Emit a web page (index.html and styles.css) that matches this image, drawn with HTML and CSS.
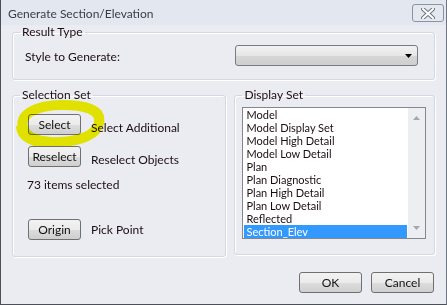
FILE: index.html
```html
<!DOCTYPE html>
<html lang="en">
<head>
  <meta charset="UTF-8">
  <title>Generate Section/Elevation</title>
  <link rel="stylesheet" href="styles.css">
</head>
<body>
  <div class="window">
    <div class="titlebar">
      <span class="title">Generate Section/Elevation</span>
      <button class="close-button">
        <svg width="14" height="11" viewBox="0 0 14 11">
          <path d="M2 1 L12 10 M12 1 L2 10" stroke="#6d7480" stroke-width="4" stroke-linecap="round"/>
          <path d="M2 1 L12 10 M12 1 L2 10" stroke="#fff" stroke-width="2" stroke-linecap="round"/>
        </svg>
      </button>
    </div>

    <div class="client">
      <fieldset class="group result-group">
        <legend>Result Type</legend>
        <div class="style-row">
          <span>Style to Generate:</span>
          <div class="combo">
            <svg width="7" height="4" viewBox="0 0 7 4"><path d="M0 0 H7 L3.5 4 Z" fill="#000"/></svg>
          </div>
        </div>
      </fieldset>

      <div class="sets">
        <fieldset class="group selection-group">
          <legend>Selection Set</legend>
          <div class="cmd-row">
            <button class="btn small-btn">Select</button>
            <span class="low">Select Additional</span>
            <!-- marker circle drawn over the dialog -->
            <svg class="marker" width="98" height="56" viewBox="0 0 98 56">
              <path d="M14 34 C6 18 28 9 52 9 C74 9 92 13 89 27 C87 38 72 45 50 46 C30 47 17 42 14 34 Z" fill="none" stroke="#f4f400" stroke-width="10"/>
              <path d="M12 30 C12 40 24 46 40 47" fill="none" stroke="#f4f400" stroke-width="12"/>
            </svg>
          </div>
          <div class="cmd-row">
            <button class="btn small-btn">Reselect</button>
            <span class="low">Reselect Objects</span>
          </div>
          <div class="count">73 items selected</div>
          <div class="cmd-row origin-row">
            <button class="btn small-btn">Origin</button>
            <span>Pick Point</span>
          </div>
        </fieldset>

        <fieldset class="group display-group">
          <legend>Display Set</legend>
          <div class="listbox">
            <ul class="items">
              <li>Model</li>
              <li>Model Display Set</li>
              <li>Model High Detail</li>
              <li>Model Low Detail</li>
              <li>Plan</li>
              <li>Plan Diagnostic</li>
              <li>Plan High Detail</li>
              <li>Plan Low Detail</li>
              <li>Reflected</li>
              <li class="selected">Section_Elev</li>
            </ul>
            <div class="scrollbar">
              <svg width="7" height="4" viewBox="0 0 7 4"><path d="M0 4 H7 L3.5 0 Z" fill="#a4a7ad"/></svg>
              <svg width="7" height="4" viewBox="0 0 7 4"><path d="M0 0 H7 L3.5 4 Z" fill="#a4a7ad"/></svg>
            </div>
          </div>
        </fieldset>
      </div>

      <div class="actions">
        <button class="btn wide-btn">OK</button>
        <button class="btn wide-btn">Cancel</button>
      </div>
    </div>
  </div>
</body>
</html>
```

FILE: styles.css
```css
body {
  margin: 0;
  background: #eaecf2;
  font-family: Lato, "Open Sans", sans-serif;
  font-size: 12px;
  color: #1c0d12;
}
.window {
  width: 447px;
  height: 305px;
  box-sizing: border-box;
  border-left: 1px solid #4b4f57;
  border-right: 1px solid #6f7682;
  border-bottom: 1px solid #4b4f57;
  background: #eaecf2;
}
.titlebar {
  height: 25px;
  display: flex;
  justify-content: space-between;
  align-items: flex-start;
  background: #e2e7f0;
}
.title {
  padding: 6px 0 0 7px;
  line-height: 16px;
  color: #3a3d44;
}
.close-button {
  margin: 4px 2px 0 0;
  width: 32px;
  height: 18px;
  padding: 0;
  border: 1px solid #8a93a3;
  border-radius: 3px;
  background: #e4e8ef;
  display: flex;
  align-items: center;
  justify-content: center;
}
.client {
  padding: 0 11px 0 11px;
}
.group {
  margin: 0;
  border: 1px solid #d3d9e2;
  border-radius: 3px;
  box-shadow: inset 1px 1px #fff, 1px 1px #fff;
  padding: 0 7px;
}
.group legend {
  padding: 0 2px;
  line-height: 14px;
}
.result-group {
  padding-top: 6px;
  padding-bottom: 13px;
}
.style-row {
  display: flex;
  justify-content: space-between;
  align-items: center;
  padding-left: 5px;
  padding-right: 9px;
}
.style-row span {
  padding-top: 2px;
}
.combo {
  width: 183px;
  height: 21px;
  box-sizing: border-box;
  border: 1px solid #767b85;
  border-radius: 3px;
  background: linear-gradient(#f2f2f2, #e6e6e6 50%, #d6d6d6 51%, #cfcfcf);
  display: flex;
  justify-content: flex-end;
  align-items: center;
  padding-right: 5px;
}
.sets {
  display: flex;
  align-items: flex-start;
  gap: 8px;
  margin-top: 8px;
}
.selection-group {
  width: 215px;
  box-sizing: border-box;
  padding-top: 12px;
  padding-bottom: 16px;
}
.display-group {
  width: 201px;
  box-sizing: border-box;
  padding-top: 5px;
  padding-bottom: 15px;
}
.cmd-row {
  position: relative;
  display: flex;
  align-items: center;
  gap: 10px;
  padding-left: 8px;
  margin-bottom: 11px;
}
.cmd-row .low {
  padding-top: 6px;
}
.btn {
  height: 21px;
  padding: 0;
  box-sizing: border-box;
  border: 1px solid #707070;
  border-radius: 3px;
  background: linear-gradient(#f2f2f2, #ebebeb 50%, #dddddd 51%, #cfcfcf);
  font-family: inherit;
  font-size: 12px;
  color: #111;
}
.small-btn {
  width: 53px;
}
.marker {
  position: absolute;
  left: -10px;
  top: -18px;
  mix-blend-mode: multiply;
  pointer-events: none;
}
.count {
  padding-left: 7px;
  line-height: 14px;
  margin-bottom: 27px;
}
.origin-row {
  margin-bottom: 0;
}
.listbox {
  display: flex;
  width: 184px;
  height: 132px;
  box-sizing: border-box;
  border: 1px solid #828790;
}
.items {
  list-style: none;
  margin: 0;
  padding: 0 1px;
  flex: 1;
  background: #fff;
  font-size: 11px;
}
.items li {
  height: 13px;
  line-height: 13px;
  padding-left: 2px;
  white-space: nowrap;
}
.items .selected {
  background: #3399ff;
  color: #fff;
}
.scrollbar {
  width: 17px;
  display: flex;
  flex-direction: column;
  justify-content: space-between;
  align-items: center;
  padding: 8px 0 8px;
  box-sizing: border-box;
  background: #eceef2;
}
.actions {
  display: flex;
  justify-content: flex-end;
  gap: 9px;
  margin-top: 15px;
  padding-right: 1px;
}
.wide-btn {
  width: 63px;
}
```
